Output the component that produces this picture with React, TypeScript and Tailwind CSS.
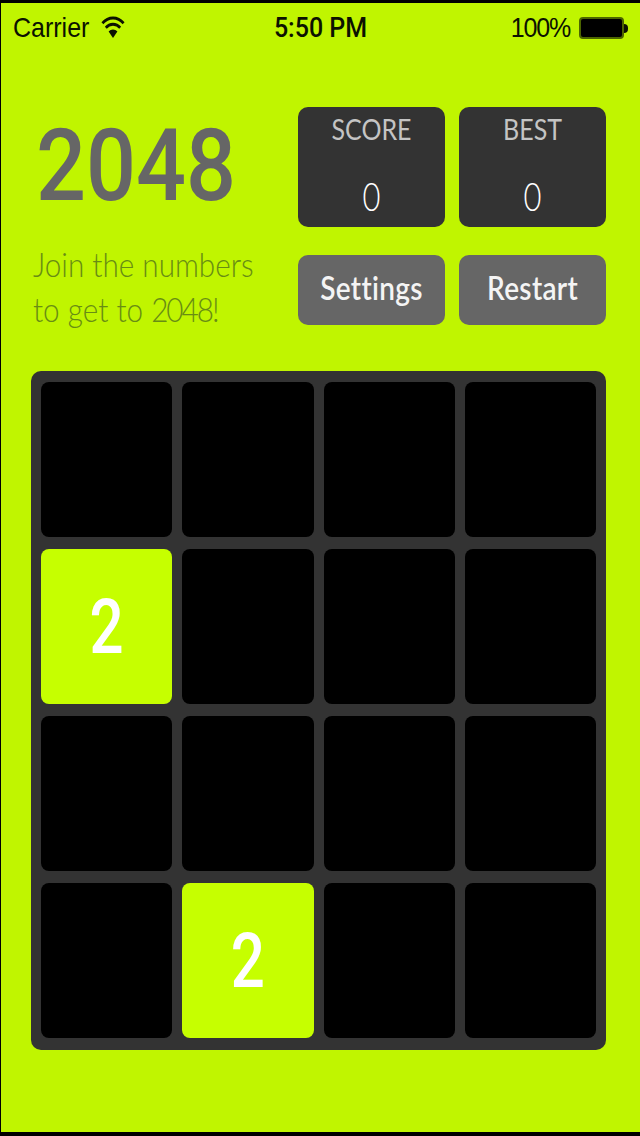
const rows = [
  [0, 0, 0, 0],
  [2, 0, 0, 0],
  [0, 0, 0, 0],
  [0, 2, 0, 0],
];

function Wifi() {
  return (
    <svg width="24" height="24" viewBox="0 0 24 24" className="ml-[12px]">
      <path d="M12 21 L7.6 15.2 C10 12.8 14 12.8 16.4 15.2 Z" fill="#0c1200" />
      <path d="M4.8 11.8 C8.8 7.6 15.2 7.6 19.2 11.8" fill="none" stroke="#0c1200" strokeWidth="2.6" />
      <path d="M1.4 7.8 C7.4 1.4 16.6 1.4 22.6 7.8" fill="none" stroke="#0c1200" strokeWidth="2.6" />
    </svg>
  );
}

function StatBox({ label }: { label: string }) {
  return (
    <div className="w-[147px] h-[120px] rounded-[10px] bg-[#333333] flex flex-col items-center">
      <div className="mt-[3px] text-[25px] leading-[36px] text-[#c4c4c4] scale-y-[1.18]">{label}</div>
      <div className="mt-[30px] text-[31px] leading-[40px] font-light text-white scale-y-[1.28]">0</div>
    </div>
  );
}

function ActionButton({ label }: { label: string }) {
  return (
    <div className="w-[147px] h-[70px] pb-[6px] rounded-[10px] bg-[#666666] flex items-center justify-center text-[28px] font-semibold tracking-[0.3px] text-[#f4f4f4]">
      <span className="scale-y-[1.18]">{label}</span>
    </div>
  );
}

export default function App() {
  return (
    <div className="w-[640px] h-[1136px] bg-black pt-[3px] pb-[4px] pl-[1px] font-['Lato',sans-serif]">
      <div className="h-full bg-[#c0f500] flex flex-col">
        <div className="h-[50px] flex items-center justify-between px-[12px] font-['Liberation_Sans',sans-serif] text-[#0c1200]">
          <div className="flex items-center w-[180px] text-[25px] scale-y-[1.12] origin-left">
            Carrier
            <Wifi />
          </div>
          <div className="font-['Roboto',sans-serif] text-[25px] font-medium scale-y-[1.12]">5:50 PM</div>
          <div className="flex items-center justify-end w-[180px] text-[25px] tracking-[-1.2px]">
            <span className="scale-y-[1.12]">100%</span>
            <div className="ml-[9px] w-[45px] h-[22px] rounded-[4px] border-2 border-[#4c6500] bg-black" />
            <div className="w-[4px] h-[9px] rounded-r-full bg-[#0c1200]" />
          </div>
        </div>

        <div className="flex pl-[35px] pr-[33px] mt-[54px]">
          <div className="w-[262px]">
            <div className="h-[120px] flex items-center font-['Roboto',sans-serif] font-medium text-[88px] leading-none text-[#666666]">
              <span className="scale-y-[1.13] -mt-[3px]">2048</span>
            </div>
            <div className="mt-[15px] -ml-[3px] text-[29.7px] leading-[45px] font-light text-[#688d14]">
              <div className="scale-y-[1.1] origin-left">Join the numbers</div>
              <div className="scale-y-[1.1] origin-left">
                to get to <span className="tracking-[-2px]">2048!</span>
              </div>
            </div>
          </div>
          <div className="flex flex-col gap-[28px]">
            <div className="flex gap-[14px]">
              <StatBox label="SCORE" />
              <StatBox label="BEST" />
            </div>
            <div className="flex gap-[14px]">
              <ActionButton label="Settings" />
              <ActionButton label="Restart" />
            </div>
          </div>
        </div>

        <div className="ml-[30px] mt-[39px] w-[575px] h-[679px] rounded-[10px] bg-[#333333] px-[10px] pt-[11px] pb-[12px] grid grid-cols-4 grid-rows-4 gap-x-[10px] gap-y-[12px]">
          {rows.flat().map((v, i) => (
            <div
              key={i}
              className={
                v
                  ? "rounded-[8px] bg-[#c6ff00] flex items-center justify-center text-white text-[60px] font-['Roboto',sans-serif] font-medium"
                  : "rounded-[8px] bg-black"
              }
            >
              {v ? <span className="scale-y-[1.28]">{v}</span> : null}
            </div>
          ))}
        </div>
      </div>
    </div>
  );
}
